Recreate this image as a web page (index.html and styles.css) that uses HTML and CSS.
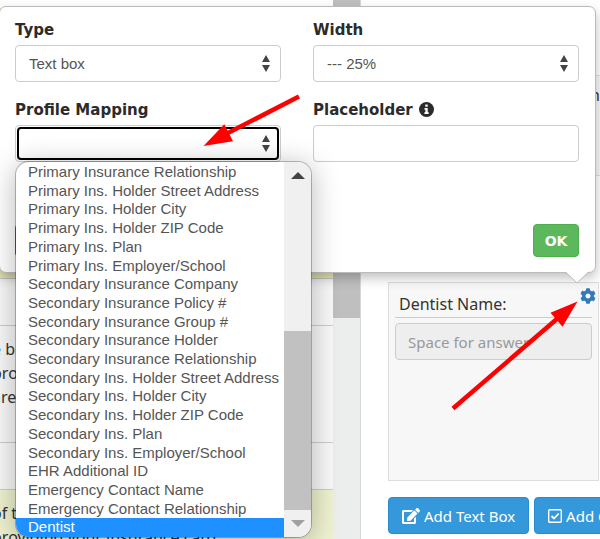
FILE: index.html
```html
<!DOCTYPE html>
<html lang="en">
<head>
  <meta charset="UTF-8" />
  <title>Form Builder</title>
  <link rel="stylesheet" href="styles.css">
</head>
<body>
  <div class="page">
    <div class="list">
      <div class="list-row first selected"></div>
      <div class="list-row"></div>
      <div class="list-row tall">
        <p>e b<br>pro<br>area</p>
      </div>
      <div class="list-row"></div>
      <div class="list-row selected last">
        <p>of the<br>providing your insurance card</p>
      </div>
    </div>

    <div class="page-scroll"><div class="page-thumb"></div></div>

    <main class="preview">
      <div class="panel upper">n</div>

      <div class="panel">
        <button class="gear-btn" aria-label="Settings">
          <svg width="16" height="16" viewBox="0 0 512 512" fill="#337ab7"><path d="M487.400 315.700l-42.600-24.600c4.300-23.200 4.300-47 0-70.200l42.600-24.600c4.900-2.800 7.100-8.600 5.500-14-11.100-35.600-30-67.800-54.700-94.600-3.800-4.100-10-5.100-14.800-2.300L380.800 110c-17.900-15.400-38.500-27.300-60.800-35.100V25.800c0-5.600-3.900-10.500-9.400-11.700-36.700-8.200-74.300-7.800-109.200 0-5.500 1.200-9.400 6.100-9.400 11.700V75c-22.200 7.900-42.800 19.800-60.800 35.100L88.700 85.500c-4.900-2.800-11-1.900-14.800 2.300-24.700 26.700-43.600 58.900-54.700 94.600-1.700 5.400.6 11.200 5.500 14L67.300 221c-4.300 23.200-4.300 47 0 70.200l-42.600 24.600c-4.900 2.800-7.100 8.600-5.500 14 11.100 35.600 30 67.800 54.700 94.600 3.800 4.100 10 5.100 14.800 2.300l42.600-24.600c17.900 15.400 38.500 27.300 60.800 35.100v49.200c0 5.600 3.900 10.500 9.400 11.700 36.700 8.200 74.300 7.800 109.200 0 5.500-1.200 9.400-6.100 9.400-11.700v-49.200c22.200-7.900 42.800-19.800 60.800-35.100l42.600 24.600c4.900 2.800 11 1.900 14.800-2.300 24.700-26.700 43.600-58.900 54.700-94.600 1.500-5.500-.7-11.300-5.600-14.100zM256 336c-44.100 0-80-35.900-80-80s35.900-80 80-80 80 35.900 80 80-35.900 80-80 80z"/></svg>
        </button>
        <label class="question" for="answer">Dentist Name:</label>
        <input class="answer" type="text" id="answer" placeholder="Space for answer" disabled />
      </div>

      <div class="add-buttons">
        <button class="add-btn">
          <svg width="18" height="16" viewBox="0 0 576 512" fill="#fff"><path d="M402.600 83.200l90.200 90.200c3.800 3.800 3.800 10 0 13.800L274.400 405.600l-92.800 10.300c-12.400 1.400-22.900-9.100-21.500-21.500l10.300-92.800L388.800 83.200c3.800-3.800 10-3.800 13.800 0zm162-22.900l-48.800-48.800c-15.200-15.200-39.900-15.200-55.200 0l-35.400 35.400c-3.800 3.800-3.800 10 0 13.800l90.200 90.200c3.800 3.800 10 3.800 13.800 0l35.400-35.400c15.200-15.300 15.200-40 0-55.200zM384 346.200V448H64V128h229.800c3.200 0 6.200-1.300 8.500-3.500l40-40c7.600-7.600 2.200-20.500-8.500-20.500H48C21.500 64 0 85.500 0 112v352c0 26.500 21.500 48 48 48h352c26.500 0 48-21.500 48-48V306.200c0-10.700-12.900-16-20.500-8.500l-40 40c-2.200 2.300-3.500 5.300-3.500 8.500z"/></svg>
          Add Text Box
        </button>
        <button class="add-btn">
          <svg width="14" height="14" viewBox="0 0 14 14" fill="none" stroke="#fff"><rect x="0.700" y="0.700" width="12.600" height="12.600" rx="1" stroke-width="1.400"/><path d="M3.500 7l2.500 2.500 4.700-5" stroke-width="1.800"/></svg>
          Add Checkbox
        </button>
      </div>
    </main>
  </div>

  <form class="popover">
    <div class="fields">
      <div class="field">
        <label for="type">Type</label>
        <div class="select">
          <select id="type"><option>Text box</option></select>
          <svg width="8" height="17" viewBox="0 0 8 17" fill="#444"><path d="M4 0l4 7H0zM4 17l4-7H0z"/></svg>
        </div>
      </div>
      <div class="field">
        <label for="width">Width</label>
        <div class="select">
          <select id="width"><option>--- 25%</option></select>
          <svg width="8" height="17" viewBox="0 0 8 17" fill="#444"><path d="M4 0l4 7H0zM4 17l4-7H0z"/></svg>
        </div>
      </div>
      <div class="field">
        <label for="mapping">Profile Mapping</label>
        <div class="select open">
          <select id="mapping"><option></option></select>
          <svg width="8" height="17" viewBox="0 0 8 17" fill="#444"><path d="M4 0l4 7H0zM4 17l4-7H0z"/></svg>
        </div>
        <div class="dropdown">
          <ul class="options" role="listbox" aria-label="Profile Mapping">
            <li role="option">Primary Insurance Relationship</li>
            <li role="option">Primary Ins. Holder Street Address</li>
            <li role="option">Primary Ins. Holder City</li>
            <li role="option">Primary Ins. Holder ZIP Code</li>
            <li role="option">Primary Ins. Plan</li>
            <li role="option">Primary Ins. Employer/School</li>
            <li role="option">Secondary Insurance Company</li>
            <li role="option">Secondary Insurance Policy #</li>
            <li role="option">Secondary Insurance Group #</li>
            <li role="option">Secondary Insurance Holder</li>
            <li role="option">Secondary Insurance Relationship</li>
            <li role="option">Secondary Ins. Holder Street Address</li>
            <li role="option">Secondary Ins. Holder City</li>
            <li role="option">Secondary Ins. Holder ZIP Code</li>
            <li role="option">Secondary Ins. Plan</li>
            <li role="option">Secondary Ins. Employer/School</li>
            <li role="option">EHR Additional ID</li>
            <li role="option">Emergency Contact Name</li>
            <li role="option">Emergency Contact Relationship</li>
            <li role="option" class="active" aria-selected="true">Dentist</li>
          </ul>
          <div class="scrollbar">
            <svg width="14" height="7" viewBox="0 0 14 7" fill="#444"><path d="M7 0l7 7H0z"/></svg>
            <div class="thumb"></div>
            <svg width="14" height="7" viewBox="0 0 14 7" fill="#a0a0a0"><path d="M7 7l7-7H0z"/></svg>
          </div>
        </div>
      </div>
      <div class="field">
        <label for="placeholder">Placeholder
          <svg width="15" height="15" viewBox="0 0 15 15"><circle cx="7.500" cy="7.500" r="7.500" fill="#2b2b2b"/><path d="M6.300 2.500h2.400v2.200H6.300zM5.500 6h3.200v4.300h1v1.700H5.400v-1.700h1V7.700h-.9z" fill="#fff"/></svg>
        </label>
        <input type="text" id="placeholder" />
      </div>
    </div>

    <div class="actions">
      <button type="button" class="btn delete" aria-label="Delete"></button>
      <button type="button" class="btn ok">OK</button>
    </div>

    <svg class="pointer" width="22" height="12" viewBox="0 0 22 12"><path d="M0 0h22L11 11z" fill="#fff"/><path d="M0 .5L11 11 22 .5" fill="none" stroke="#bbb"/></svg>
  </form>

  <!-- red annotation arrows -->
  <svg class="arrows" width="600" height="539" viewBox="0 0 600 539" fill="#f00" stroke="#f00">
    <path d="M299 96.500L226 134" stroke-width="4.500"/>
    <path d="M203.500 146l20.800-21.700 8.700 17z" stroke="none"/>
    <path d="M453 408.500L558 318" stroke-width="4.500"/>
    <path d="M577.500 301.500l-27 11.200 12 14z" stroke="none"/>
  </svg>
</body>
</html>
```
FILE: styles.css
```css
* {
  box-sizing: border-box;
}

body {
  margin: 0;
  height: 100vh;
  overflow: hidden;
  position: relative;
  background: #fff;
  color: #333;
  font-family: "Noto Sans", "Open Sans", sans-serif;
  font-size: 16px;
}

button,
input,
select {
  font: inherit;
  color: inherit;
}

/* Page behind the popover */
.page {
  display: grid;
  grid-template-columns: 333px 28px 1fr;
  height: 100%;
}

.list {
  display: flex;
  flex-direction: column;
  overflow: hidden;
}

.list-row {
  flex: none;
  height: 47px;
  border-bottom: 1px solid #ccc;
  background: #f8f8f8;
}

.list-row p {
  margin: 11px 0 0 -8px;
  line-height: 24px;
  white-space: nowrap;
}

.list-row.first {
  height: 279px;
  background: linear-gradient(#fff 8px, #eef0b8 8px);
}

.list-row.tall {
  height: 117px;
}

.list-row.selected.last {
  height: 80px;
  background: #eff2cf;
}

.page-scroll {
  background: #eceeee;
  border-right: 1px solid #d8d8d8;
}

.page-thumb {
  height: 318px;
  background: #bfbfbf;
}

.preview {
  padding: 75px 1px 0 27px;
  min-width: 0;
  overflow: hidden;
}

.panel {
  position: relative;
  height: 199px;
  padding: 8px 6px;
  border: 1px solid #ddd;
  background: #f7f7f7;
  display: flex;
  flex-direction: column;
}

.panel.upper {
  height: 101px;
  margin: 0 -8px 106px 0;
  text-align: right;
}

.question {
  padding-left: 4px;
  line-height: 26px;
  border-bottom: 1px solid #ccc;
}

.answer {
  width: 100%;
  height: 37px;
  margin-top: 5px;
  padding: 0 12px;
  border: 1px solid #ccc;
  border-radius: 4px;
  background: #eee;
  font-size: 15px;
}

.answer::placeholder {
  color: #999;
}

.gear-btn {
  position: absolute;
  top: 5px;
  right: 2px;
  padding: 0;
  border: none;
  background: none;
  display: flex;
  cursor: pointer;
}

.add-buttons {
  display: flex;
  gap: 5px;
  margin-top: 16px;
}

.add-btn {
  flex: none;
  display: flex;
  align-items: center;
  gap: 4px;
  height: 37px;
  padding: 0 13px;
  border: 1px solid #2a8bcc;
  border-radius: 4px;
  background: #3498db;
  color: #fff;
  font-size: 15px;
  cursor: pointer;
}

/* Popover */
.popover {
  position: absolute;
  top: 6px;
  left: -1px;
  right: 4px;
  padding: 10px 16px 15px 15px;
  border: 1px solid #bbb;
  border-radius: 7px;
  background: #fff;
  box-shadow: 0 5px 12px rgba(0, 0, 0, 0.25);
  font-family: "Liberation Sans", Arial, sans-serif;
}

.fields {
  display: grid;
  grid-template-columns: 1fr 1fr;
  gap: 15px 32px;
}

.field {
  position: relative;
}

.field label {
  display: flex;
  align-items: center;
  gap: 6px;
  height: 25px;
  margin-bottom: 3px;
  font-family: "DejaVu Sans", sans-serif;
  font-size: 15px;
  font-weight: 700;
  color: #2b2b2b;
}

.select,
.field > input {
  width: 100%;
  height: 37px;
  border: 1px solid #ccc;
  border-radius: 4px;
  background: #fff;
}

.select {
  display: grid;
  align-items: center;
}

.select select {
  grid-area: 1 / 1;
  width: 100%;
  height: 100%;
  padding: 0 13px;
  border: none;
  background: none;
  appearance: none;
  font-size: 15px;
  color: #555;
}

.select svg {
  grid-area: 1 / 1;
  justify-self: end;
  margin-right: 10px;
  pointer-events: none;
}

.select.open {
  padding: 1px;
}

.select.open select {
  border: 2px solid #000;
  border-radius: 4px;
}

.select.open svg {
  margin-right: 9px;
}

.dropdown {
  position: absolute;
  top: 64px;
  left: 0;
  z-index: 1;
  display: flex;
  width: 297px;
  height: 377px;
  overflow: hidden;
  border: 1px solid rgba(0, 0, 0, 0.25);
  border-radius: 14px;
  background: #fff;
  background-clip: padding-box;
  box-shadow: 0 4px 28px rgba(0, 0, 0, 0.28);
}

.options {
  flex: 1;
  min-width: 0;
  display: grid;
  grid-auto-rows: 1fr;
  margin: 0;
  padding: 1px 0 0;
  list-style: none;
  font-size: 15px;
  color: #555;
}

.options li {
  padding-left: 12px;
  line-height: 18px;
  white-space: nowrap;
}

.options .active {
  background: #1e90ff;
  color: #fff;
}

.scrollbar {
  flex: none;
  width: 27px;
  padding: 10px 0;
  background: #f0f0f0;
  display: flex;
  flex-direction: column;
  align-items: center;
}

.scrollbar .thumb {
  width: 100%;
  height: 179px;
  margin: auto 0 10px;
  background: #c1c1c1;
}

.actions {
  display: flex;
  justify-content: space-between;
  margin-top: 62px;
}

.btn {
  width: 46px;
  height: 33px;
  padding: 0;
  border-radius: 4px;
  font-family: "DejaVu Sans", sans-serif;
  font-size: 14px;
  font-weight: 700;
  color: #fff;
  cursor: pointer;
}

.delete {
  border: 1px solid #d43f3a;
  background: #d9534f;
}

.ok {
  border: 1px solid #4cae4c;
  background: #5cb85c;
}

.pointer {
  position: absolute;
  right: 7px;
  bottom: -12px;
}

.arrows {
  position: absolute;
  top: 0;
  left: 0;
  z-index: 2;
  pointer-events: none;
}
```
